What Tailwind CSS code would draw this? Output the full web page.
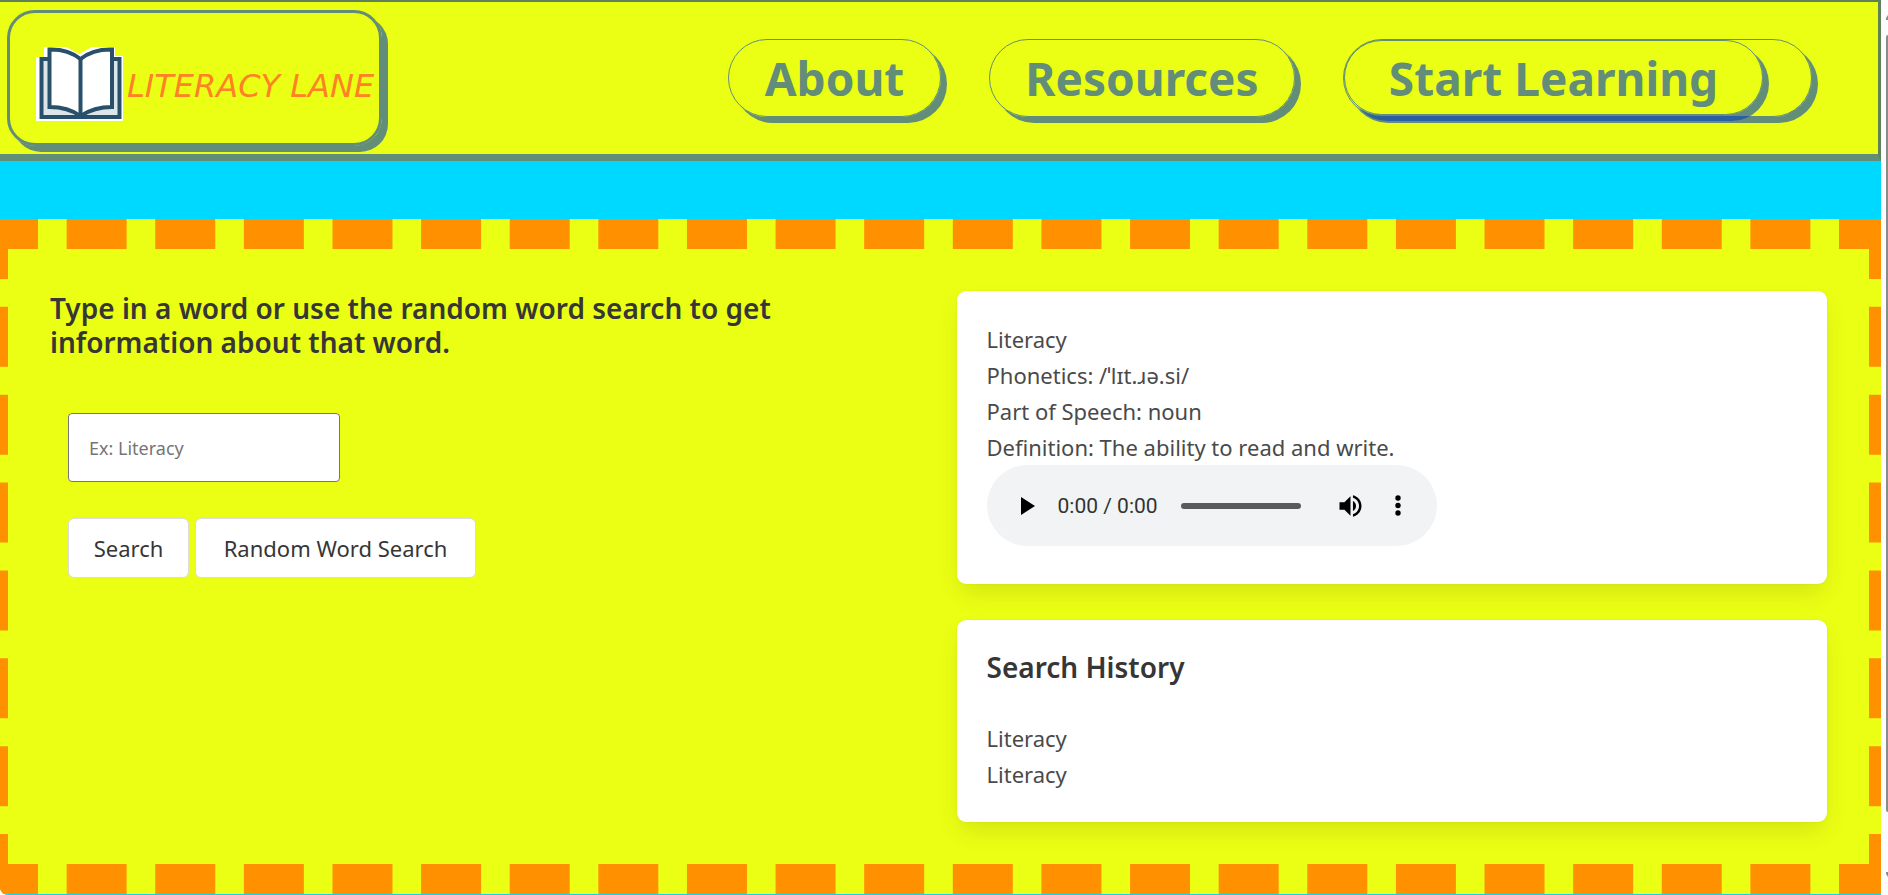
<!DOCTYPE html>
<html lang="en">
<head>
<meta charset="utf-8">
<meta name="viewport" content="width=device-width, initial-scale=1">
<title>Literacy Lane</title>
<script src="https://cdn.jsdelivr.net/npm/@tailwindcss/browser@4"></script>
</head>
<body class="flex min-h-screen overflow-hidden bg-white font-['Segoe_UI','Noto_Sans',sans-serif] text-[22px] leading-9 text-[#4a4a4a]">
<div class="flex min-w-0 grow flex-col overflow-hidden rounded-bl-lg bg-[#00d9ff]">
  <header class="flex h-[161px] items-start justify-between border-t-2 border-r-3 border-b-7 border-t-[#5f8058] border-r-[#5f8058] border-b-[#628d79] bg-[#ebff14] pt-2 pr-[66px] pl-[7px]">
    <a href="#" class="flex h-[136px] min-w-[375px] items-center gap-1 rounded-[28px] border-3 border-[#628d79] pr-1 pl-[26px] shadow-[6px_6px_0_#628d79]">
      <svg class="mt-3 h-[76px] w-[87px]" viewBox="0 0 87 76" aria-hidden="true">
        <path d="M0 11H8V1H30L43 8L56 1H79V10H87V75H0Z" fill="#fff"/>
        <rect x="5.500" y="13" width="78" height="58" fill="#dce6e8" stroke="#28506a" stroke-width="4"/>
        <path d="M13.500 3.500Q32 3 44.500 13Q57 3 76 3.500V61Q58 61 44.500 70Q32 61 13.500 61Z" fill="#fff" stroke="#28506a" stroke-width="4"/>
        <path d="M44.500 13V70" stroke="#28506a" stroke-width="4"/>
      </svg>
      <span class="mt-4 font-['Comic_Sans_MS','DejaVu_Sans',sans-serif] text-[32px] leading-10 whitespace-nowrap text-[#ff8126] italic">LITERACY LANE</span>
    </a>
    <nav class="mt-[29px] flex gap-12 font-['Comic_Sans_MS','Noto_Sans',sans-serif] text-[46px] font-bold whitespace-nowrap text-[#628d79]">
      <a href="#" class="flex h-[78px] w-[213px] items-center justify-center rounded-full border border-[#628d79] shadow-[6px_6px_0_#628d79]">About</a>
      <a href="#" class="flex h-[78px] w-[306px] items-center justify-center rounded-full border border-[#628d79] shadow-[6px_6px_0_#628d79]">Resources</a>
      <div class="h-[78px] w-[469px] rounded-full border border-[#0741bc]/60 shadow-[6px_6px_0_rgb(7_65_188/0.6)]">
        <button type="button" class="flex h-[75px] w-[419px] items-center justify-center rounded-full border border-[#0741bc]/60 shadow-[6px_6px_0_rgb(7_65_188/0.6)]">Start Learning</button>
      </div>
    </nav>
  </header>
  <main class="mt-[58px] mr-[-18px] mb-px ml-[-22px] grid min-h-[675px] grow grid-cols-2 gap-9 border-30 border-dashed border-[#ff9100] bg-[#ebff14] p-[42px]">
    <section class="pr-24">
      <h1 class="text-[28px] leading-[34px] font-semibold text-[#363636]">Type in a word or use the random word search to get information about that word.</h1>
      <form class="mt-[54px] ml-[18px]">
        <input type="text" aria-label="Word" placeholder="Ex: Literacy" class="block h-[69px] w-[272px] rounded border border-[#767676] bg-white px-5 text-[18px] placeholder:text-[#757575]">
        <div class="mt-9 flex gap-[6px] text-[#363636]">
          <button type="button" class="h-15 w-[121px] rounded-md border border-[#dbdbdb] bg-white">Search</button>
          <button type="button" class="h-15 w-[281px] rounded-md border border-[#dbdbdb] bg-white">Random Word Search</button>
        </div>
      </form>
    </section>
    <section class="flex flex-col gap-9">
      <article class="rounded-[9px] bg-white px-[30px] pt-[30px] pb-[38px] shadow-[0_12px_24px_-3px_rgb(10_10_10/0.1),0_0_0_1px_rgb(10_10_10/0.02)]">
        <p>Literacy</p>
        <p>Phonetics: /ˈlɪt.ɹə.si/</p>
        <p>Part of Speech: noun</p>
        <p>Definition: The ability to read and write.</p>
        <div class="flex h-[81px] w-[450px] items-center rounded-full bg-[#f1f3f4] pl-[34px] text-black">
          <button type="button" aria-label="Play"><svg class="h-[18px] w-[14px]" viewBox="0 0 14 18"><path d="M0 0L14 9L0 18Z"/></svg></button>
          <span class="ml-[23px] w-[98px] font-[Roboto] text-[21px] whitespace-nowrap text-[#333]">0:00 / 0:00</span>
          <div class="ml-[25px] h-[6px] w-[120px] rounded-full bg-[#5a5a5a]"></div>
          <button type="button" aria-label="Mute" class="ml-[38px]"><svg class="h-[22px] w-[23px]" viewBox="3 3 18 18"><path d="M3 9v6h4l5 5V4L7 9H3zm13.500 3c0-1.770-1.020-3.290-2.500-4.030v8.050c1.480-.73 2.500-2.250 2.500-4.020zM14 3.230v2.060c2.890.86 5 3.540 5 6.710s-2.110 5.850-5 6.710v2.060c4.010-.91 7-4.490 7-8.770s-2.990-7.860-7-8.770z"/></svg></button>
          <button type="button" aria-label="More options" class="ml-[33px]"><svg class="h-[21px] w-[6px]" viewBox="0 0 6 21"><circle cx="3" cy="3" r="2.700"/><circle cx="3" cy="10.500" r="2.700"/><circle cx="3" cy="18" r="2.700"/></svg></button>
        </div>
      </article>
      <article class="rounded-[9px] bg-white p-[30px] shadow-[0_12px_24px_-3px_rgb(10_10_10/0.1),0_0_0_1px_rgb(10_10_10/0.02)]">
        <h2 class="mb-9 text-[28px] leading-[34px] font-semibold text-[#363636]">Search History</h2>
        <p>Literacy</p>
        <p>Literacy</p>
      </article>
    </section>
  </main>
</div>
<div class="flex w-[7px] shrink-0 flex-col items-end bg-[#fcfcfc] pt-[15px]" aria-hidden="true">
  <svg class="mb-[15px] h-[5px] w-[2px]" viewBox="0 0 2 5"><path d="M2 0V5H0V3Z" fill="#8b8b8b"/></svg>
  <div class="h-[777px] w-[2px] rounded-l bg-[#8b8b8b]"></div>
  <svg class="mt-[60px] h-[5px] w-[2px]" viewBox="0 0 2 5"><path d="M0 0H2V5L0 2Z" fill="#8b8b8b"/></svg>
</div>
</body>
</html>
